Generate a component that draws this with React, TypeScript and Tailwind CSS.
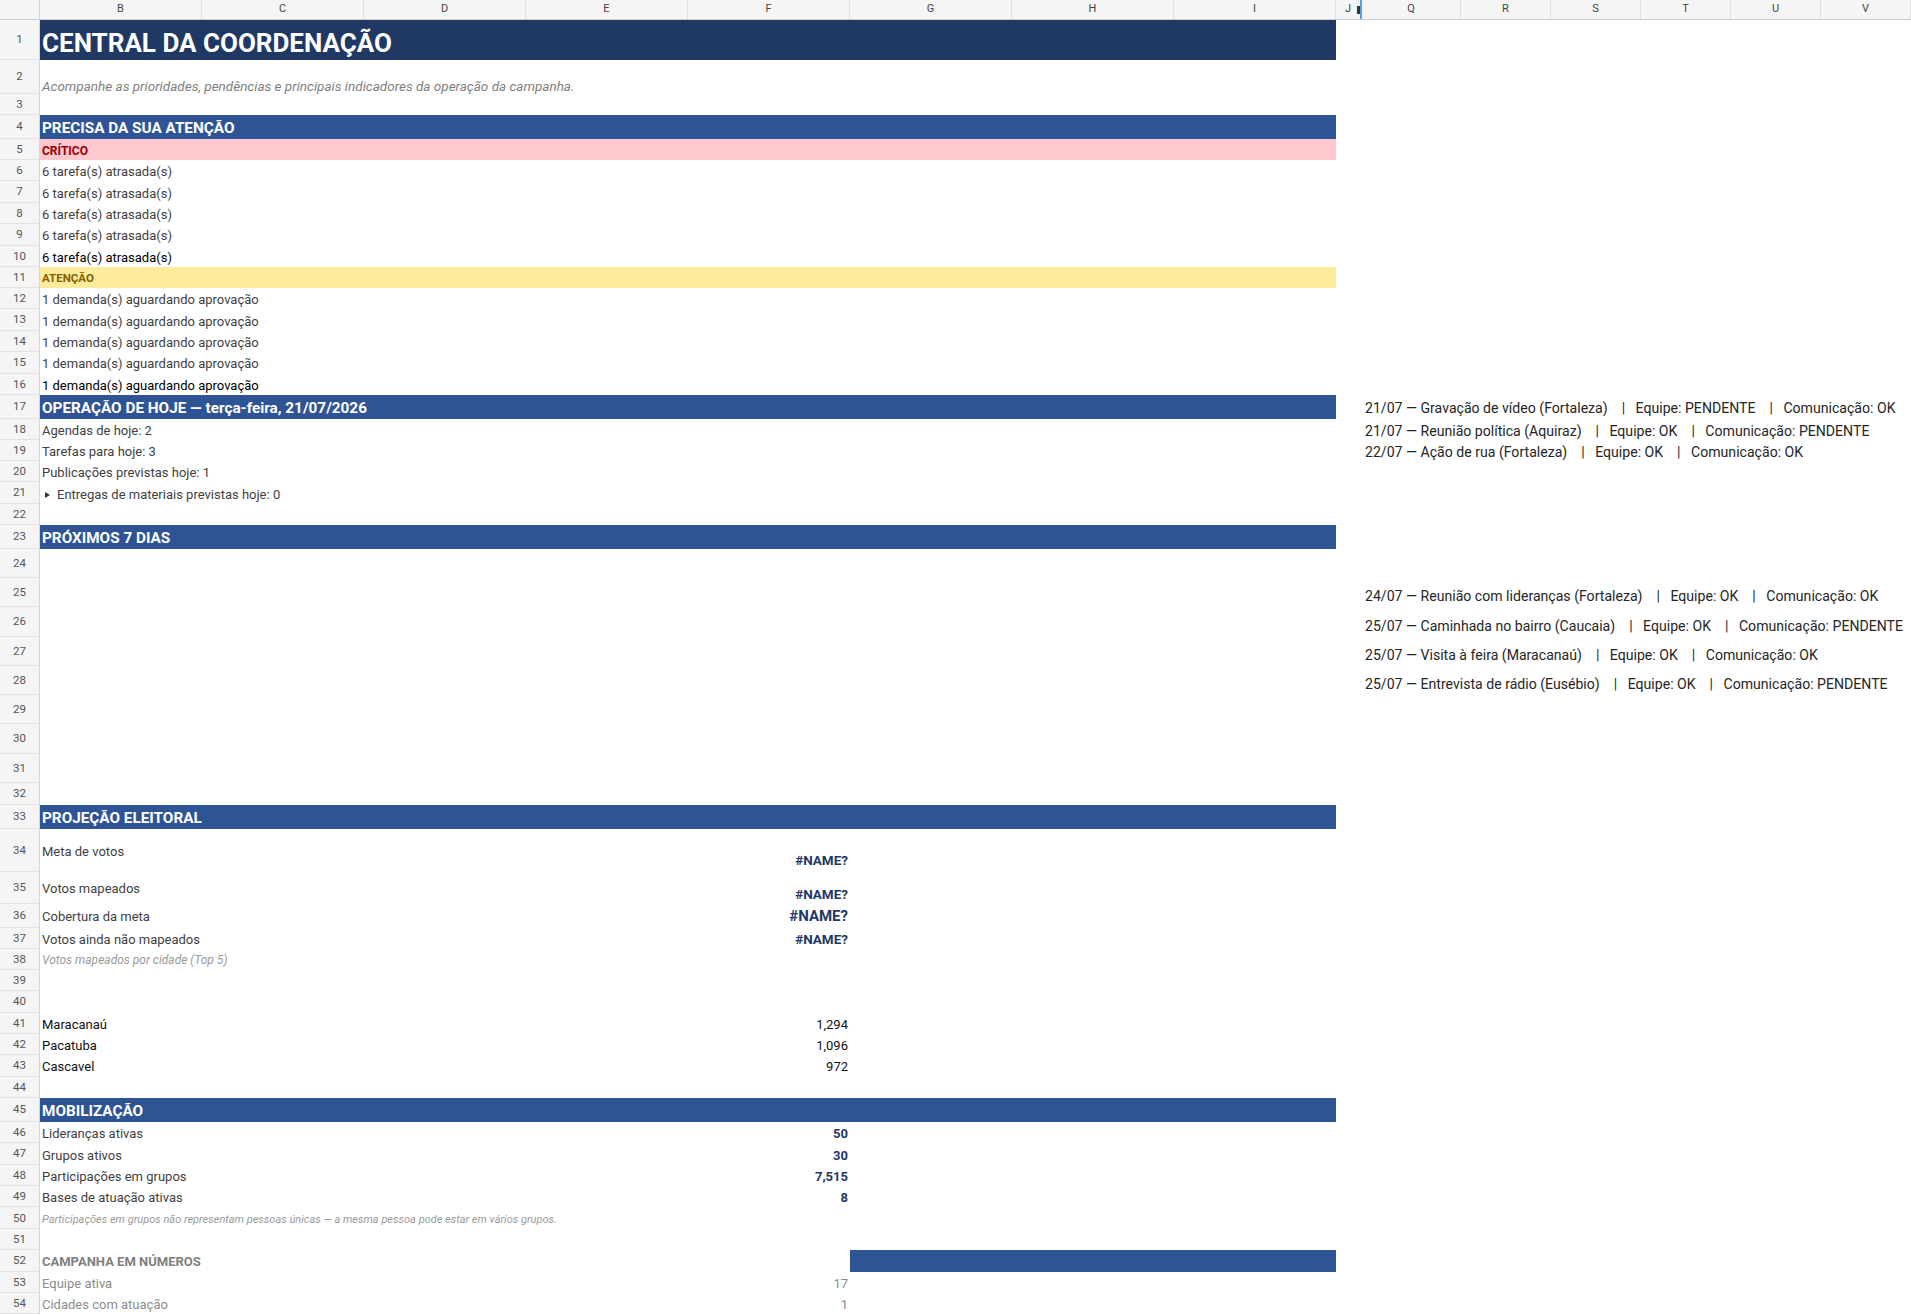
import React from "react";

type RowProps = {
  n: number;
  h: string;
  children?: React.ReactNode;
  right?: React.ReactNode;
};

function Row({ n, h, children, right }: RowProps) {
  return (
    <div className={`flex ${h}`}>
      <div className="w-[40px] shrink-0 bg-[#f5f5f5] border-r border-b border-r-[#d6d6d6] border-b-[#e2e2e2] flex items-center justify-center text-[11.5px] text-[#555555] pt-[1px]">
        {n}
      </div>
      <div className="w-[1296px] shrink-0 flex h-full">{children}</div>
      <div className="w-[26px] shrink-0" />
      <div className="flex-1 min-w-0 h-full flex">{right}</div>
    </div>
  );
}

function Banner({ text }: { text: string }) {
  return (
    <div className="w-full h-full bg-[#2f5496] flex items-center pt-[2px] pl-[2px] text-white font-bold text-[15.3px] leading-[18px] whitespace-nowrap">
      {text}
    </div>
  );
}

function Text({ children, cls }: { children: React.ReactNode; cls?: string }) {
  return (
    <div className={`h-full flex items-center pt-[2px] pl-[2px] text-[13px] leading-[15px] whitespace-nowrap ${cls ?? "text-[#3f3f3f]"}`}>
      {children}
    </div>
  );
}

function KV({
  label,
  value,
  labelCls,
  valueCls,
  valueAlign,
}: {
  label: string;
  value?: string;
  labelCls?: string;
  valueCls?: string;
  valueAlign?: string;
}) {
  return (
    <div className="w-[810px] h-full flex justify-between">
      <div className={`h-full flex items-center pt-[2px] pl-[2px] text-[13px] leading-[15px] whitespace-nowrap ${labelCls ?? "text-[#3f3f3f]"}`}>
        {label}
      </div>
      <div className={`h-full flex pr-[2px] leading-[15px] whitespace-nowrap ${valueAlign ?? "items-center pt-[2px]"} ${valueCls ?? "text-[13px] text-[#3f3f3f]"}`}>
        {value}
      </div>
    </div>
  );
}

function RightText({ children, bottom }: { children: string; bottom?: boolean }) {
  return (
    <div
      className={`h-full flex pl-[3px] text-[14.1px] leading-[16px] text-[#262626] whitespace-pre ${
        bottom ? "items-end pb-[3px]" : "items-center pt-[2px]"
      }`}
    >
      {children}
    </div>
  );
}

const COLS = ["B", "C", "D", "E", "F", "G", "H", "I"];
const RCOLS = ["R", "S", "T", "U", "V"];

export default function App() {
  const sep = "    |   ";
  return (
    <div className="w-[1911px] h-[1315px] overflow-hidden bg-white font-['Roboto','Liberation_Sans',sans-serif]">
      {/* column header */}
      <div className="flex h-[20px] bg-[#f5f5f5] border-b border-[#d0d0d0] text-[11px] text-[#444444]">
        <div className="w-[40px] shrink-0 border-r border-[#d6d6d6]" />
        {COLS.map((c) => (
          <div key={c} className="w-[162px] shrink-0 border-r border-[#e0e0e0] flex items-center justify-center">
            {c}
          </div>
        ))}
        <div className="w-[26px] shrink-0 relative flex items-center pl-[9px]">
          J
          <div className="absolute right-[2px] top-[6px] w-[3px] h-[8px] bg-[#333333]" />
          <div className="absolute right-0 top-0 w-[2px] h-full bg-[#5b9bf0]" />
        </div>
        <div className="w-[99px] shrink-0 border-r border-[#e0e0e0] flex items-center justify-center">Q</div>
        {RCOLS.map((c) => (
          <div key={c} className="w-[90px] shrink-0 border-r border-[#e0e0e0] flex items-center justify-center">
            {c}
          </div>
        ))}
      </div>

      <Row n={1} h="h-[40px]">
        <div className="w-full h-full bg-[#203864] flex items-end pb-[2px] pl-[2px] text-white font-bold text-[26px] leading-[30px]">
          CENTRAL DA COORDENAÇÃO
        </div>
      </Row>
      <Row n={2} h="h-[34px]">
        <div className="h-full flex items-end pl-[2px] text-[13.5px] leading-[15px] italic text-[#7f7f7f] whitespace-nowrap">
          Acompanhe as prioridades, pendências e principais indicadores da operação da campanha.
        </div>
      </Row>
      <Row n={3} h="h-[21px]" />
      <Row n={4} h="h-[24px]">
        <Banner text="PRECISA DA SUA ATENÇÃO" />
      </Row>
      <Row n={5} h="h-[21px]">
        <div className="w-full h-full bg-[#ffc7ce] flex items-center pt-[2px] pl-[2px] text-[#9c0006] font-bold text-[12px] leading-[14px]">
          CRÍTICO
        </div>
      </Row>
      <Row n={6} h="h-[21.4px]"><Text>6 tarefa(s) atrasada(s)</Text></Row>
      <Row n={7} h="h-[21.4px]"><Text>6 tarefa(s) atrasada(s)</Text></Row>
      <Row n={8} h="h-[21.4px]"><Text>6 tarefa(s) atrasada(s)</Text></Row>
      <Row n={9} h="h-[21.4px]"><Text>6 tarefa(s) atrasada(s)</Text></Row>
      <Row n={10} h="h-[21.4px]"><Text cls="text-black">6 tarefa(s) atrasada(s)</Text></Row>
      <Row n={11} h="h-[21px]">
        <div className="w-full h-full bg-[#ffeb9c] flex items-center pt-[2px] pl-[2px] text-[#806000] font-bold text-[11.5px] leading-[14px]">
          ATENÇÃO
        </div>
      </Row>
      <Row n={12} h="h-[21.4px]"><Text>1 demanda(s) aguardando aprovação</Text></Row>
      <Row n={13} h="h-[21.4px]"><Text>1 demanda(s) aguardando aprovação</Text></Row>
      <Row n={14} h="h-[21.4px]"><Text>1 demanda(s) aguardando aprovação</Text></Row>
      <Row n={15} h="h-[21.4px]"><Text>1 demanda(s) aguardando aprovação</Text></Row>
      <Row n={16} h="h-[21.4px]"><Text cls="text-black">1 demanda(s) aguardando aprovação</Text></Row>
      <Row
        n={17}
        h="h-[24px]"
        right={<RightText>{`21/07 — Gravação de vídeo (Fortaleza)${sep}Equipe: PENDENTE${sep}Comunicação: OK`}</RightText>}
      >
        <Banner text="OPERAÇÃO DE HOJE — terça-feira, 21/07/2026" />
      </Row>
      <Row
        n={18}
        h="h-[21.2px]"
        right={<RightText>{`21/07 — Reunião política (Aquiraz)${sep}Equipe: OK${sep}Comunicação: PENDENTE`}</RightText>}
      >
        <Text>Agendas de hoje: 2</Text>
      </Row>
      <Row
        n={19}
        h="h-[21.2px]"
        right={<RightText>{`22/07 — Ação de rua (Fortaleza)${sep}Equipe: OK${sep}Comunicação: OK`}</RightText>}
      >
        <Text>Tarefas para hoje: 3</Text>
      </Row>
      <Row n={20} h="h-[21.2px]"><Text>Publicações previstas hoje: 1</Text></Row>
      <Row n={21} h="h-[21.2px]">
        <div className="h-full flex items-center pt-[2px] pl-[5px] text-[13px] leading-[15px] text-[#3f3f3f] whitespace-nowrap">
          <svg width="5" height="6" viewBox="0 0 5 6" className="mr-[7px] mt-[1px]">
            <path d="M0 0 L5 3 L0 6 Z" fill="#333333" />
          </svg>
          Entregas de materiais previstas hoje: 0
        </div>
      </Row>
      <Row n={22} h="h-[21.2px]" />
      <Row n={23} h="h-[24px]">
        <Banner text="PRÓXIMOS 7 DIAS" />
      </Row>
      <Row n={24} h="h-[29.25px]" />
      <Row
        n={25}
        h="h-[29.25px]"
        right={<RightText bottom>{`24/07 — Reunião com lideranças (Fortaleza)${sep}Equipe: OK${sep}Comunicação: OK`}</RightText>}
      />
      <Row
        n={26}
        h="h-[29.25px]"
        right={<RightText bottom>{`25/07 — Caminhada no bairro (Caucaia)${sep}Equipe: OK${sep}Comunicação: PENDENTE`}</RightText>}
      />
      <Row
        n={27}
        h="h-[29.25px]"
        right={<RightText bottom>{`25/07 — Visita à feira (Maracanaú)${sep}Equipe: OK${sep}Comunicação: OK`}</RightText>}
      />
      <Row
        n={28}
        h="h-[29.25px]"
        right={<RightText bottom>{`25/07 — Entrevista de rádio (Eusébio)${sep}Equipe: OK${sep}Comunicação: PENDENTE`}</RightText>}
      />
      <Row n={29} h="h-[29.25px]" />
      <Row n={30} h="h-[29.25px]" />
      <Row n={31} h="h-[29.25px]" />
      <Row n={32} h="h-[22px]" />
      <Row n={33} h="h-[24px]">
        <Banner text="PROJEÇÃO ELEITORAL" />
      </Row>
      <Row n={34} h="h-[43px]">
        <KV
          label="Meta de votos"
          value="#NAME?"
          valueAlign="items-end pb-[4px]"
          valueCls="text-[13.5px] font-bold text-[#1f3864]"
        />
      </Row>
      <Row n={35} h="h-[32px]">
        <KV
          label="Votos mapeados"
          value="#NAME?"
          valueAlign="items-end pb-[2px]"
          valueCls="text-[13.5px] font-bold text-[#1f3864]"
        />
      </Row>
      <Row n={36} h="h-[24px]">
        <KV label="Cobertura da meta" value="#NAME?" valueCls="text-[15px] font-bold text-[#1f3864]" />
      </Row>
      <Row n={37} h="h-[21px]">
        <KV label="Votos ainda não mapeados" value="#NAME?" valueCls="text-[13.5px] font-bold text-[#1f3864]" />
      </Row>
      <Row n={38} h="h-[21.3px]">
        <div className="h-full flex items-center pt-[2px] pl-[2px] text-[12px] leading-[14px] italic text-[#9a9a9a] whitespace-nowrap">
          Votos mapeados por cidade (Top 5)
        </div>
      </Row>
      <Row n={39} h="h-[21.3px]" />
      <Row n={40} h="h-[21.3px]" />
      <Row n={41} h="h-[21.3px]">
        <KV label="Maracanaú" value="1,294" labelCls="text-[#111111]" valueCls="text-[13px] text-[#111111]" />
      </Row>
      <Row n={42} h="h-[21.3px]">
        <KV label="Pacatuba" value="1,096" labelCls="text-[#111111]" valueCls="text-[13px] text-[#111111]" />
      </Row>
      <Row n={43} h="h-[21.3px]">
        <KV label="Cascavel" value="972" labelCls="text-[#111111]" valueCls="text-[13px] text-[#111111]" />
      </Row>
      <Row n={44} h="h-[21.3px]" />
      <Row n={45} h="h-[24px]">
        <Banner text="MOBILIZAÇÃO" />
      </Row>
      <Row n={46} h="h-[21.4px]">
        <KV label="Lideranças ativas" value="50" valueCls="text-[13px] font-bold text-[#1f3864]" />
      </Row>
      <Row n={47} h="h-[21.4px]">
        <KV label="Grupos ativos" value="30" valueCls="text-[13px] font-bold text-[#1f3864]" />
      </Row>
      <Row n={48} h="h-[21.4px]">
        <KV label="Participações em grupos" value="7,515" valueCls="text-[13px] font-bold text-[#1f3864]" />
      </Row>
      <Row n={49} h="h-[21.4px]">
        <KV label="Bases de atuação ativas" value="8" valueCls="text-[13px] font-bold text-[#1f3864]" />
      </Row>
      <Row n={50} h="h-[21.4px]">
        <div className="h-full flex items-center pt-[2px] pl-[2px] text-[11px] leading-[13px] italic text-[#9a9a9a] whitespace-nowrap">
          Participações em grupos não representam pessoas únicas — a mesma pessoa pode estar em vários grupos.
        </div>
      </Row>
      <Row n={51} h="h-[21.4px]" />
      <Row n={52} h="h-[21.4px]">
        <div className="w-[810px] h-full flex items-center pt-[2px] pl-[2px] text-[13px] leading-[15px] font-bold text-[#7f7f7f] whitespace-nowrap">
          CAMPANHA EM NÚMEROS
        </div>
        <div className="w-[486px] h-full bg-[#2f5496]" />
      </Row>
      <Row n={53} h="h-[21.4px]">
        <KV label="Equipe ativa" value="17" labelCls="text-[#8c8c8c]" valueCls="text-[13px] text-[#8c8c8c]" />
      </Row>
      <Row n={54} h="h-[21.4px]">
        <KV label="Cidades com atuação" value="1" labelCls="text-[#8c8c8c]" valueCls="text-[13px] text-[#8c8c8c]" />
      </Row>
    </div>
  );
}
